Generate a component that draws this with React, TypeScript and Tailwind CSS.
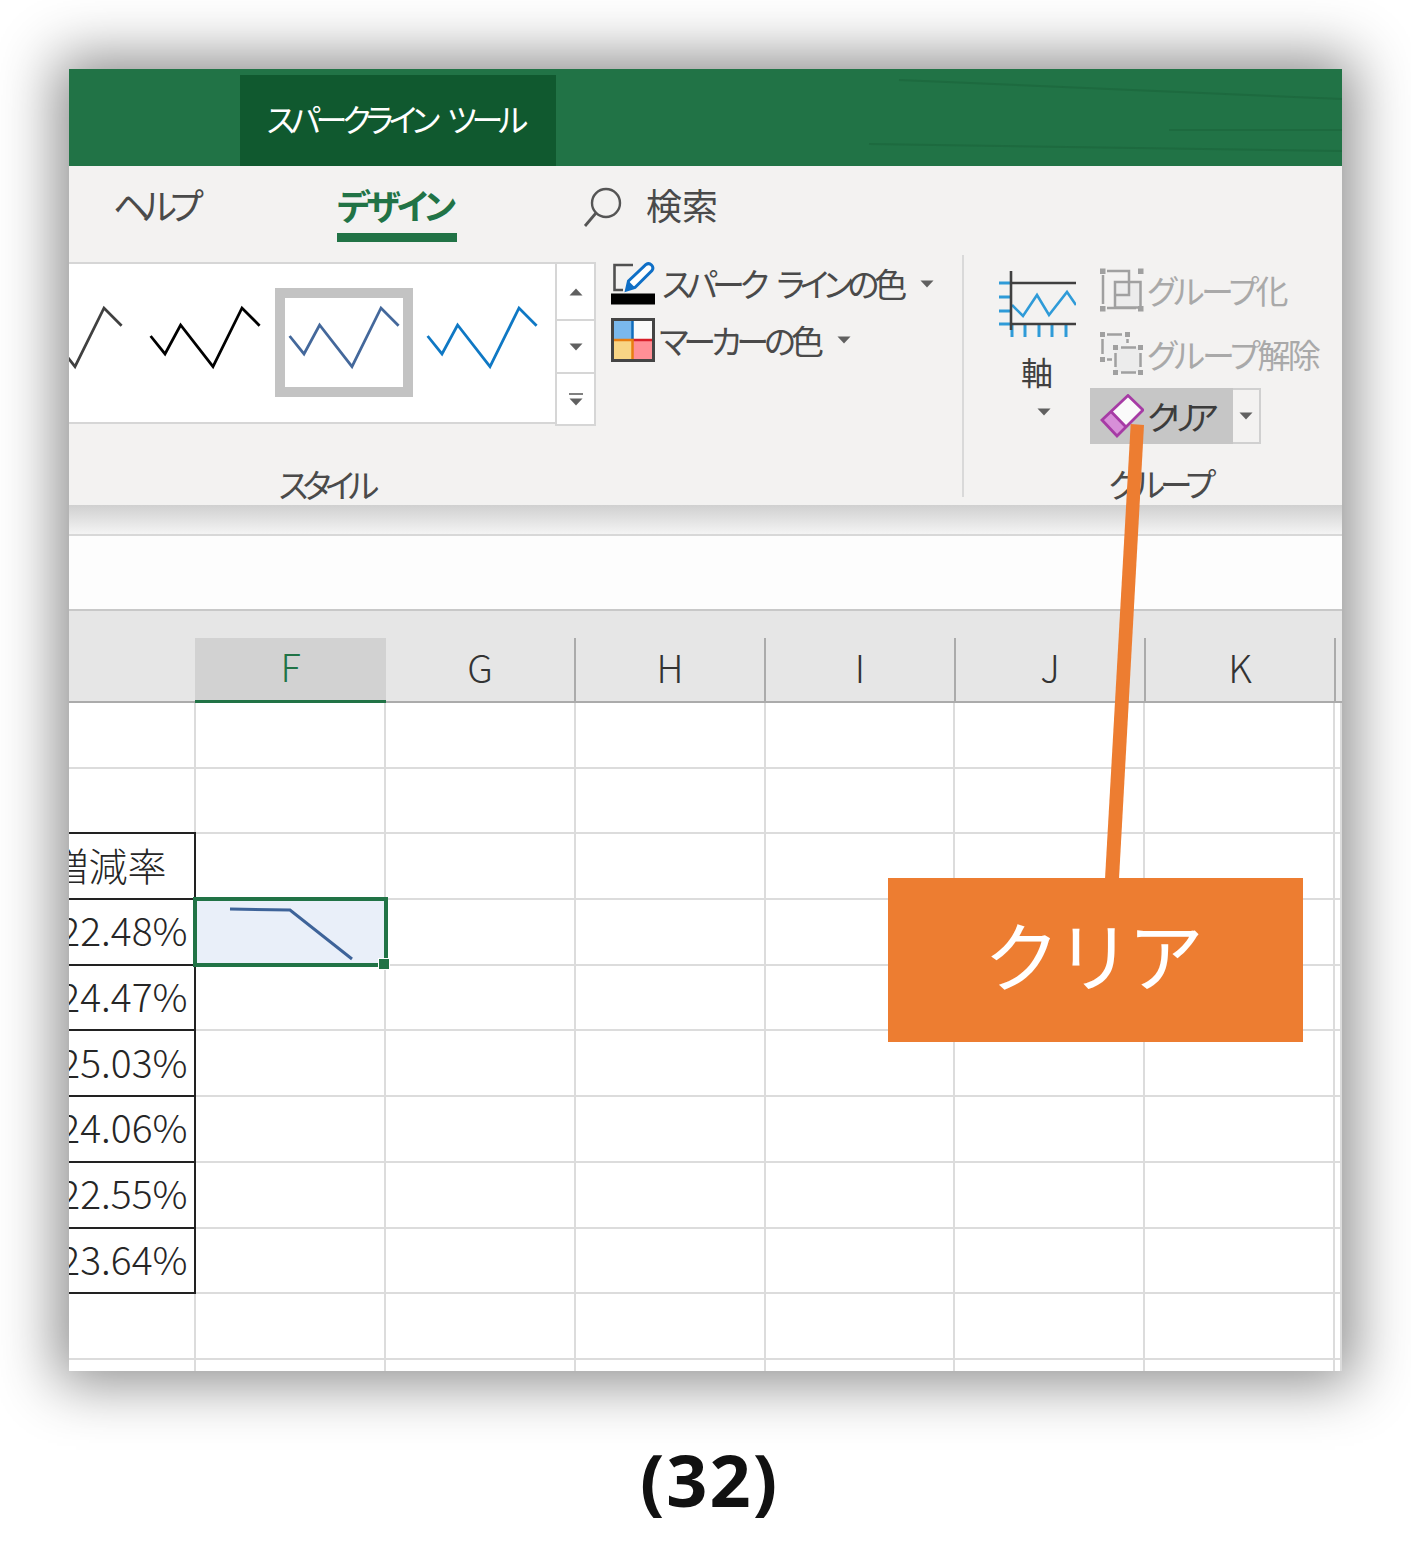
import React from "react";

const zigzag = "14.6,48 29,66 44.6,37 77,78.7 106,20 123.6,37.7";

const columns = ["F", "G", "H", "I", "J", "K"];
const rates = ["22.48%", "24.47%", "25.03%", "24.06%", "22.55%", "23.64%"];

function Caret({ className = "" }: { className?: string }) {
  return (
    <svg width="14" height="8" viewBox="0 0 14 8" className={className}>
      <path d="M0.5 0.5h13L7 7.5z" fill="#606060" />
    </svg>
  );
}

function Thumb({ color, selected }: { color: string; selected?: boolean }) {
  return (
    <div className="relative w-[138.6px] h-[109px] shrink-0">
      {selected && <div className="absolute inset-0 border-[10px] border-[#c3c3c3]"></div>}
      <svg width="138.6" height="109" viewBox="0 0 138.6 109" className="relative">
        <polyline points={zigzag} fill="none" stroke={color} strokeWidth="2.800" />
      </svg>
    </div>
  );
}

function PenIcon() {
  return (
    <svg width="45" height="43" viewBox="0 0 45 43" className="shrink-0">
      <path d="M22 3H3.500V28H12" fill="none" stroke="#505050" strokeWidth="2.600" />
      <path d="M15.500 28l2-9L35 2.500q3-2 5.500 0.500t0.500 5.500L24 25.500z" fill="#fff" stroke="#0f6fc6" strokeWidth="3" />
      <path d="M15.500 28l2-9 6.500 6.500z" fill="#0f6fc6" />
      <rect x="0" y="31.500" width="44" height="11" fill="#000" />
    </svg>
  );
}

function MarkerIcon() {
  return (
    <svg width="44" height="44" viewBox="0 0 44 44" className="shrink-0">
      <rect x="1.500" y="1.500" width="20" height="20" fill="#7ab8ec" />
      <rect x="21.500" y="1.500" width="21" height="20" fill="#fafafa" />
      <rect x="1.500" y="21.500" width="20" height="21" fill="#f8d585" />
      <rect x="21.500" y="21.500" width="21" height="21" fill="#ff8f96" />
      <path d="M21.500 2v20" stroke="#0f6cbd" strokeWidth="2.500" />
      <path d="M21.500 22H43" stroke="#d8202a" strokeWidth="2.500" />
      <path d="M2 22h19.500v21" fill="none" stroke="#e87d10" strokeWidth="2.500" />
      <rect x="1.500" y="1.500" width="41" height="41" fill="none" stroke="#444" strokeWidth="3" />
    </svg>
  );
}

function AxisIcon() {
  return (
    <svg width="78" height="66" viewBox="0 0 78 66">
      <g stroke="#2f9bd8" strokeWidth="3" fill="none">
        <path d="M1 12h12M1 26h12M1 40h12M1 53h12" />
        <path d="M14 53v13M27 53v13M41 53v13M54 53v13M68 53v13" />
        <polyline points="14,34 25,45 39,24 51,44 69,21 78,34" strokeWidth="2.600" />
      </g>
      <path d="M13 0v59M13 12h65M13 53h65" stroke="#404040" strokeWidth="2.600" fill="none" />
    </svg>
  );
}

function GroupIcon() {
  return (
    <svg width="44" height="44" viewBox="0 0 44 44" className="shrink-0">
      <rect x="15" y="14" width="25.500" height="25.500" fill="#ececec" />
      <path d="M7 3H29V27H15V14H40.500V39.500H15V27M3 7V36M7 40H36" fill="none" stroke="#a0a0a0" strokeWidth="2.500" />
      <g fill="#a0a0a0">
        <rect x="0" y="0.500" width="5.500" height="5.500" />
        <rect x="38" y="0.500" width="5.500" height="5.500" />
        <rect x="0" y="38" width="5.500" height="5.500" />
        <rect x="38" y="38" width="5.500" height="5.500" />
      </g>
    </svg>
  );
}

function UngroupIcon() {
  return (
    <svg width="44" height="44" viewBox="0 0 44 44" className="shrink-0">
      <rect x="3" y="3" width="24" height="24" fill="#f0f0f0" />
      <rect x="15" y="15" width="25" height="25" fill="#ececec" />
      <g fill="#a0a0a0">
        <rect x="0" y="0" width="5" height="5" />
        <rect x="25" y="0" width="5" height="5" />
        <rect x="0" y="25" width="5" height="5" />
        <rect x="13" y="13" width="5" height="5" />
        <rect x="38" y="13" width="5" height="5" />
        <rect x="13" y="38" width="5" height="5" />
        <rect x="38" y="38" width="5" height="5" />
      </g>
      <path d="M7 2.500h15M2.500 7v15M27.500 7v4M7 27.500h5M21 15.500h15M15.500 21v14M40.500 21v14M21 40.500h15" stroke="#a0a0a0" strokeWidth="2.500" fill="none" />
    </svg>
  );
}

function EraserIcon() {
  return (
    <svg width="44" height="44" viewBox="0 0 44 44" className="shrink-0">
      <path d="M2 26L28 1.500 43 16 17 42z" fill="#fafafa" />
      <path d="M2 26L11 17.500 26 33 17 42z" fill="#d78fd8" />
      <path d="M2 26L28 1.500 43 16 17 42zM11 17.500L26 33" fill="none" stroke="#a63ba5" strokeWidth="2.800" />
    </svg>
  );
}

function SearchIcon() {
  return (
    <svg width="40" height="42" viewBox="0 0 40 42">
      <circle cx="23" cy="17" r="14" fill="none" stroke="#555" strokeWidth="2.400" />
      <path d="M13 27L2 40" stroke="#555" strokeWidth="2.800" />
    </svg>
  );
}

function Ribbon() {
  return (
    <div className="h-[339px] bg-[#f3f2f1] flex flex-col">
      <div className="h-[84px] flex items-center text-[36px] leading-none">
        <div className="w-[268px] pl-[44px] -mt-[8px] text-[#4a4a4a] tracking-[-6.500px]">ヘルプ</div>
        <div className="relative w-[120px] -mt-[8px] text-left font-bold text-[#217346] text-[35px] tracking-[-4px] whitespace-nowrap">
          デザイン
          <div className="absolute left-0 right-0 top-[46px] h-[9px] bg-[#217346]"></div>
        </div>
        <div className="ml-[126px] -mt-[3px]">
          <SearchIcon />
        </div>
        <div className="ml-[23px] -mt-[8px] text-[#4a4a4a]">検索</div>
      </div>
      <div className="flex h-[255px]">
        <div className="w-[893px] flex flex-col justify-between">
          <div className="flex pt-[12px] items-start">
            <div className="w-[486px] h-[162px] pb-[1px] bg-white border-y-2 border-[#d6d6d6] flex items-center justify-end pr-[3px] overflow-hidden">
              <Thumb color="#404040" />
              <Thumb color="#000000" />
              <Thumb color="#44689b" selected />
              <Thumb color="#0f78c4" />
            </div>
            <div className="w-[41px] h-[164px] bg-white border-2 border-[#d6d6d6] flex flex-col">
              <div className="h-[57px] flex items-center justify-center border-b-2 border-[#d6d6d6]">
                <Caret className="rotate-180" />
              </div>
              <div className="h-[53px] flex items-center justify-center border-b-2 border-[#d6d6d6]">
                <Caret />
              </div>
              <div className="flex-1 flex flex-col items-center justify-center gap-[3px]">
                <div className="w-[14px] h-[2px] bg-[#808080]"></div>
                <Caret />
              </div>
            </div>
            <div className="ml-[15px] flex flex-col text-[33px] text-[#4a4a4a] leading-none">
              <div className="h-[43px] flex items-center">
                <PenIcon />
                <span className="ml-[6px] tracking-[-5.200px] [word-spacing:10px] whitespace-pre">スパーク ラインの色</span>
                <Caret className="ml-[18px]" />
              </div>
              <div className="mt-[13px] h-[44px] flex items-center">
                <MarkerIcon />
                <span className="ml-[4px] tracking-[-5px]">マーカーの色</span>
                <Caret className="ml-[18px]" />
              </div>
            </div>
          </div>
          <div className="w-[514px] text-center text-[33px] leading-[40px] mb-[1px] text-[#4a4a4a] tracking-[-6px]">スタイル</div>
        </div>
        <div className="mt-[5px] h-[242px] w-[2px] bg-[#d9d9d9]"></div>
        <div className="flex-1 flex flex-col justify-between">
          <div className="flex">
            <div className="ml-[34px] w-[78px] flex flex-col items-center pt-[21px]">
              <AxisIcon />
              <div className="mt-[18px] text-[32px] leading-none text-[#404040]">軸</div>
              <Caret className="mt-[21px] ml-[13px]" />
            </div>
            <div className="ml-[14px] flex flex-col pt-[18px] text-[33px] leading-none">
              <div className="h-[44px] pl-[10px] flex items-center text-[#a9a9a9]">
                <GroupIcon />
                <span className="ml-[3px] tracking-[-3.300px]">グループ化</span>
              </div>
              <div className="mt-[20px] h-[44px] pl-[10px] flex items-center text-[#a9a9a9]">
                <UngroupIcon />
                <span className="ml-[3px] tracking-[-2.800px]">グループ解除</span>
              </div>
              <div className="mt-[12px] w-[171px] h-[56px] flex">
                <div className="w-[143px] bg-[#c6c6c6] pl-[10px] flex items-center text-[#3c3c3c]">
                  <EraserIcon />
                  <span className="ml-[3px] tracking-[-8px]">クリア</span>
                </div>
                <div className="flex-1 border-2 border-l-0 border-[#d0d0d0] flex items-center justify-center">
                  <Caret />
                </div>
              </div>
            </div>
          </div>
          <div className="pl-[14px] text-center text-[33px] leading-[40px] mb-[2px] text-[#4a4a4a] tracking-[-5px]">グループ</div>
        </div>
      </div>
    </div>
  );
}

function ColumnHeaders() {
  return (
    <div className="h-[94px] bg-[#e6e6e6] border-t-2 border-[#c8c8c8] flex items-end">
      <div className="w-[126px] h-[65px] border-b-2 border-[#ababab]"></div>
      {columns.map((c, i) => (
        <div
          key={c}
          className={
            i === 0
              ? "w-[191px] h-[65px] pb-[7px] flex items-center justify-center bg-[#d2d2d2] border-b-[3px] border-[#217346] text-[#217346] text-[38px] font-light"
              : "w-[190px] h-[65px] pb-[7px] flex items-center justify-center border-b-2 border-r-2 border-[#ababab] text-[#333] text-[38px] font-light"
          }
        >
          {c}
        </div>
      ))}
      <div className="flex-1 h-[65px] border-b-2 border-[#ababab]"></div>
    </div>
  );
}

function Cell({ children, boxed, top }: { children?: React.ReactNode; boxed?: boolean; top?: boolean }) {
  if (boxed) {
    return (
      <div
        className={
          "border-r-2 border-b-2 border-[#222] flex items-center justify-end overflow-hidden whitespace-nowrap pr-[6px] pb-[4px] text-[39px] leading-none text-[#262626] " +
          (top ? "border-t-2 -mt-[2px]" : "")
        }
      >
        {children}
      </div>
    );
  }
  return <div className="border-r-2 border-b-2 border-[#dcdcdc]">{children}</div>;
}

function SheetGrid() {
  const rows = Array.from({ length: 11 }, (_, r) => r);
  return (
    <div className="grid grid-cols-[126.500px_190px_190px_190px_189.500px_190px_190px_1fr] auto-rows-[65.700px]">
      {rows.map((r) => (
        <React.Fragment key={r}>
          {r === 2 ? (
            <Cell boxed top>
              <span className="font-light shrink-0">増減率</span>
              <span className="w-[21px] shrink-0"></span>
            </Cell>
          ) : r >= 3 && r <= 8 ? (
            <Cell boxed>
              <span className="font-light shrink-0">{rates[r - 3]}</span>
            </Cell>
          ) : (
            <Cell />
          )}
          {columns.map((c) =>
            c === "F" && r === 3 ? (
              <div key={c} className="relative border-r-2 border-b-2 border-[#dcdcdc]">
                <div className="absolute -left-[3px] -top-[3px] w-[195px] h-[70px] bg-[#e9eff9] border-[4px] border-[#217346]">
                  <svg width="187" height="62" viewBox="0 0 187 62">
                    <polyline points="33,8 93,9 155,58" fill="none" stroke="#3e6399" strokeWidth="3" />
                  </svg>
                </div>
                <div className="absolute left-[182px] top-[58px] w-[12px] h-[12px] bg-[#217346] border border-white"></div>
              </div>
            ) : (
              <Cell key={c} />
            )
          )}
          <Cell />
        </React.Fragment>
      ))}
    </div>
  );
}

export default function App() {
  return (
    <div className="w-[1411px] h-[1562px] bg-white overflow-hidden flex flex-col items-center pt-[69px] font-['Noto_Sans_CJK_JP',sans-serif] [font-feature-settings:'palt']">
      <div className="relative w-[1273px] h-[1302px] shrink-0 overflow-hidden shadow-[0_0_55px_12px_rgba(0,0,0,0.45)]">
        <div className="h-[97px] bg-[#217346] pl-[171px] flex items-end">
          <div className="w-[316px] h-[91px] pb-[6px] pr-[6px] bg-[#10592f] flex items-center justify-center text-white text-[32px] tracking-[-5px] [word-spacing:10px] whitespace-pre">
            スパークライン ツール
          </div>
        </div>
        <Ribbon />
        <div className="h-[29px] bg-gradient-to-b from-[#d0d0d0] to-[#f4f4f4]"></div>
        <div className="h-[75px] bg-[#fdfdfd] border-t-2 border-[#d8d8d8]"></div>
        <ColumnHeaders />
        <SheetGrid />

        {/* faint background pattern of the title bar */}
        <svg width="1273" height="97" viewBox="0 0 1273 97" className="absolute left-0 top-0">
          <path d="M830 11L1273 30M1100 61H1273M800 75L1273 82" stroke="#1d6a3f" strokeWidth="2" fill="none" />
        </svg>

        {/* callout */}
        <svg width="1273" height="1302" viewBox="0 0 1273 1302" className="absolute left-0 top-0">
          <polygon points="1061.700,355 1075,356 1050,810 1036,810" fill="#ed7d31" />
        </svg>
        <div className="absolute left-[819px] top-[809px] w-[415px] h-[164px] pb-[14px] pl-[3px] bg-[#ed7d31] flex items-center justify-center text-white text-[76px] leading-none tracking-[7px]">
          クリア
        </div>
      </div>
      <div className="mt-[72px] ml-[8px] text-[72px] leading-none font-bold tracking-[2px] text-[#111] font-['Noto_Sans',sans-serif]">(32)</div>
    </div>
  );
}
